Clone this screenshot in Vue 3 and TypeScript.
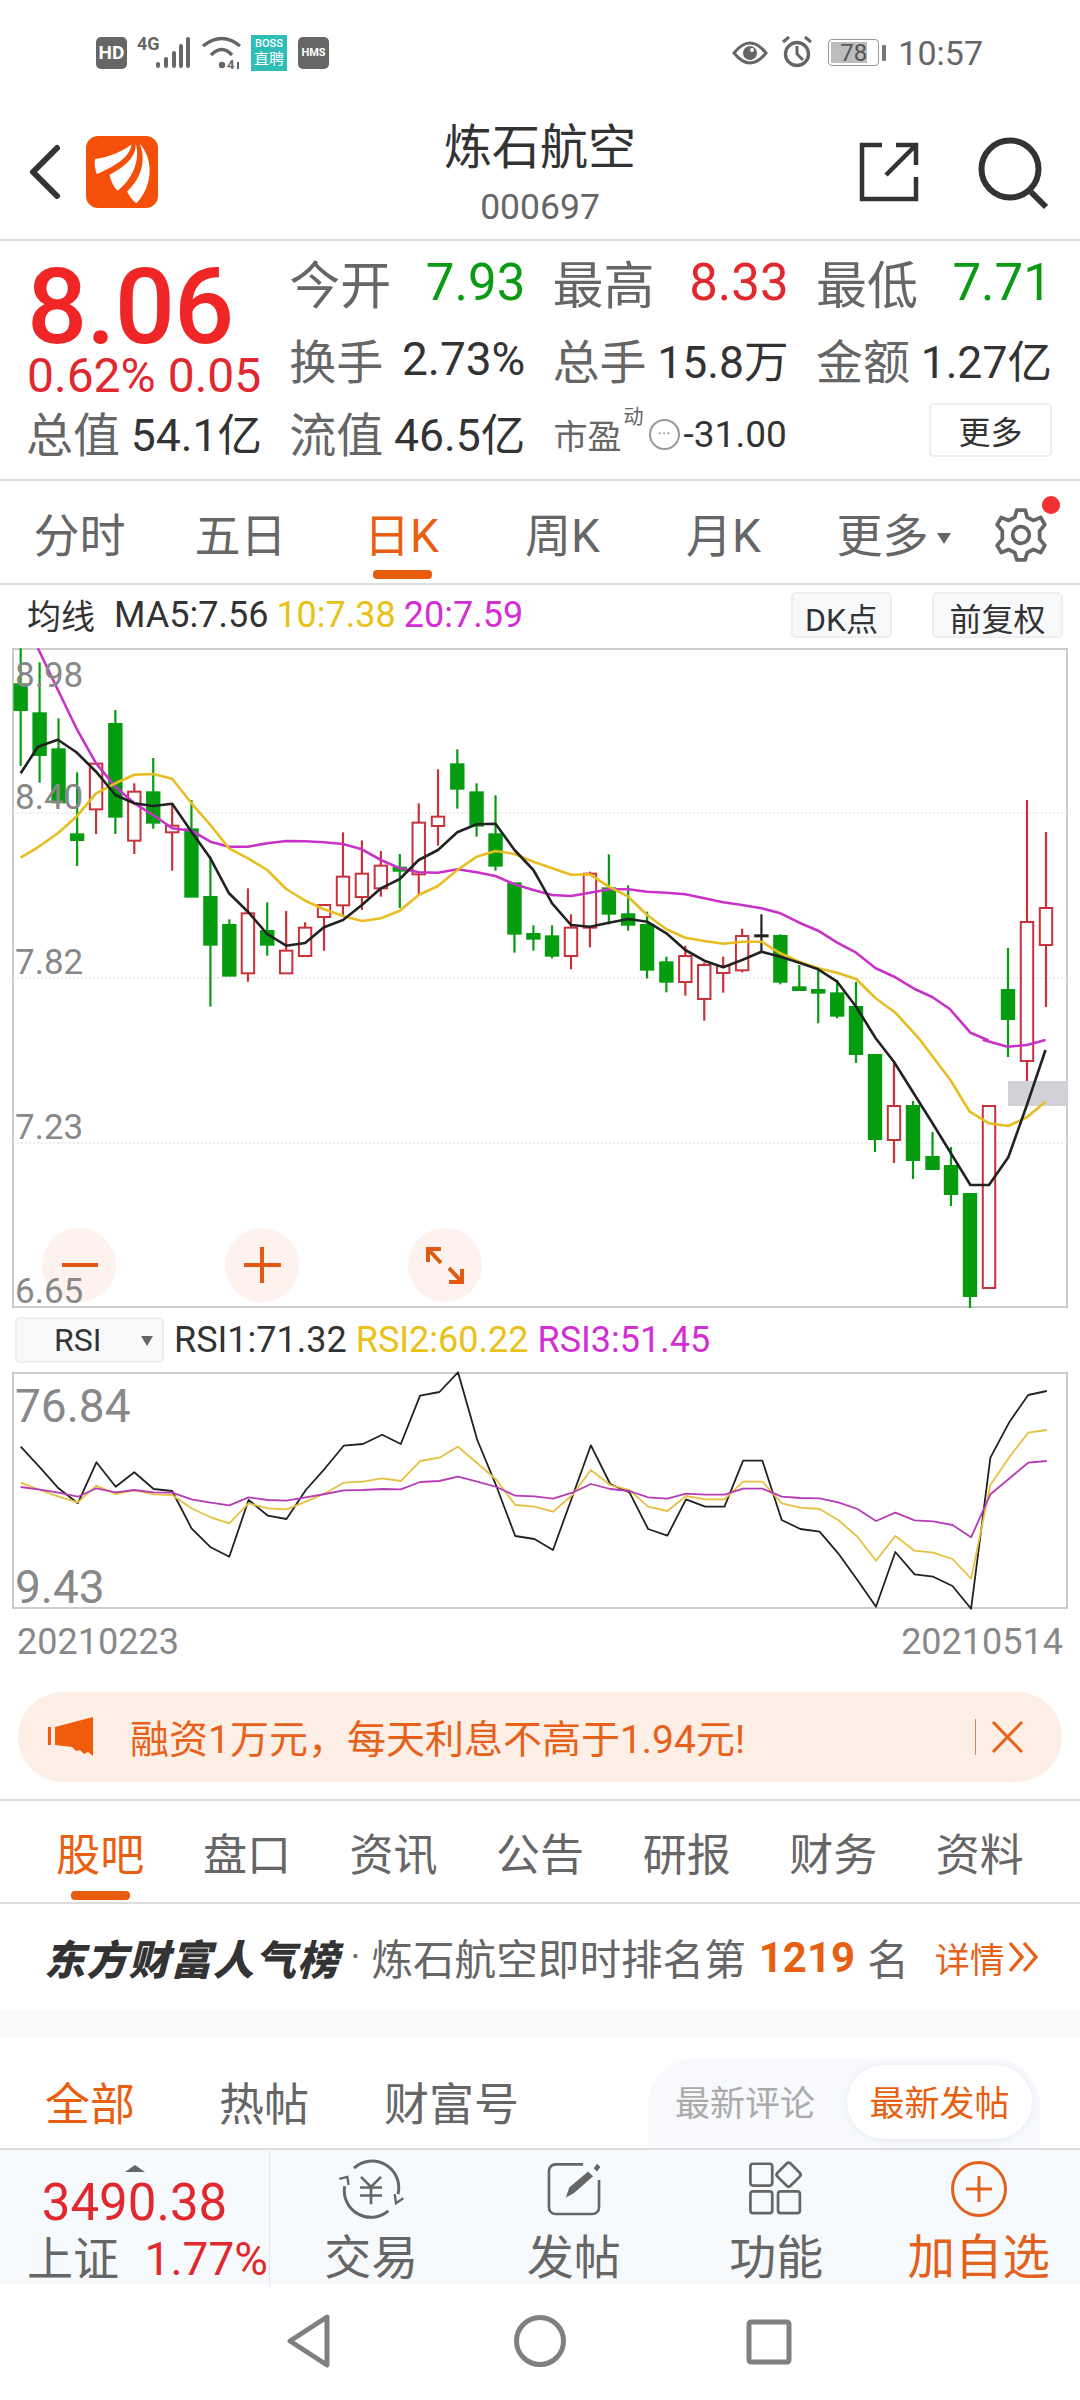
<template>
  <div class="page">
    <div class="status-bar">
      <div class="status-left">
        <div class="chip chip-hd">HD</div>
        <svg class="sig" width="54" height="40" viewBox="139 33 54 40">
          <text x="139" y="50" class="sig-text">4G</text>
          <rect x="158" y="62" width="4" height="6" rx="2" />
          <rect x="166" y="57" width="4" height="11" rx="2" />
          <rect x="174" y="51" width="4" height="17" rx="2" />
          <rect x="181" y="44" width="4" height="24" rx="2" />
          <rect x="188" y="37" width="4" height="31" rx="2" />
        </svg>
        <svg class="wifi" width="40" height="34" viewBox="201 36 40 34">
          <path d="M203 46 Q222 31 240 46" />
          <path d="M211 55 Q222 44 232 55" />
          <circle cx="222" cy="65" r="3.2" />
          <text x="227" y="69" class="wifi-text">4</text>
          <path d="M238 62 V69" class="wifi-thin" />
        </svg>
        <div class="chip-boss">
          <span class="boss-en">BOSS</span>
          <span class="boss-cn">直聘</span>
        </div>
        <div class="chip chip-hms">HMS</div>
      </div>
      <div class="status-right">
        <svg width="36" height="26" viewBox="0 0 36 26">
          <path d="M2 13 Q18 -7 34 13 Q18 33 2 13Z" fill="none" stroke="#666" stroke-width="3" />
          <circle cx="18" cy="13" r="7" fill="#666" />
          <circle cx="20" cy="10" r="2" fill="#fff" />
        </svg>
        <svg class="alarm" width="34" height="33" viewBox="0 0 34 33">
          <circle cx="17" cy="19" r="11.5" fill="none" stroke="#666" stroke-width="3.4" />
          <path d="M17 11 V19 L23 25 M3 7 L9 2 M31 7 L25 2" fill="none" stroke="#666" stroke-width="3" />
        </svg>
        <div class="battery">
          <div class="battery-fill"></div>
          <span class="battery-num">78</span>
        </div>
        <div class="battery-nub"></div>
        <span class="clock">10:57</span>
      </div>
    </div>

    <div class="nav">
      <svg class="back" width="34" height="56" viewBox="0 0 34 56">
        <path d="M29 4 L5 28 L29 52" fill="none" stroke="#333" stroke-width="6" stroke-linecap="round" stroke-linejoin="round" />
      </svg>
      <svg class="logo" width="72" height="72" viewBox="198 35 214 214">
        <rect x="198" y="35" width="214" height="214" rx="36" fill="#f4500a" />
        <path d="M225 103 C262 98 300 85 333 60 C330 90 300 118 230 148 C224 130 222 115 225 103Z" fill="#fff" />
        <path d="M345 56 C350 90 320 125 268 150 C272 170 280 185 292 198 C335 165 362 105 345 56Z" fill="#fff" />
        <path d="M356 56 C378 100 365 160 320 200 C328 215 338 228 348 235 C392 190 405 110 356 56Z" fill="#fff" />
      </svg>
      <div class="nav-title">
        <div class="stock-name">炼石航空</div>
        <div class="stock-code">000697</div>
      </div>
      <svg class="share" width="60" height="60" viewBox="858 142 60 60">
        <path d="M881 145 H861 V199 H915 V177 M885 175 L914 146 M895 145 H915 V165" fill="none" stroke="#333" stroke-width="4.5" />
      </svg>
      <svg class="search" width="70" height="70" viewBox="977 137 70 70">
        <circle cx="1009" cy="169" r="28.5" fill="none" stroke="#333" stroke-width="6" />
        <path d="M1030 192 L1045 207" fill="none" stroke="#333" stroke-width="6" />
      </svg>
    </div>

    <div class="quote">
      <div class="price-cell">
        <div class="price">8.06</div>
        <div class="price-sub">0.62% 0.05</div>
      </div>
      <div class="cell big"><span class="lab">今开</span><span class="green">7.93</span></div>
      <div class="cell big"><span class="lab">最高</span><span class="red">8.33</span></div>
      <div class="cell big"><span class="lab">最低</span><span class="green">7.71</span></div>
      <div class="cell"><span class="lab">换手</span><span>2.73%</span></div>
      <div class="cell"><span class="lab">总手</span><span class="unit-val">15.8万</span></div>
      <div class="cell"><span class="lab">金额</span><span class="unit-val">1.27亿</span></div>
      <div class="cell row3"><span class="lab">总值</span><span class="unit-val">54.1亿</span></div>
      <div class="cell row3"><span class="lab">流值</span><span class="unit-val">46.5亿</span></div>
      <div class="cell pe">
        <span class="lab pe-lab">市盈</span>
        <span class="pe-sup">动</span>
        <span class="pe-dots">···</span>
        <span class="pe-val">-31.00</span>
      </div>
      <div class="cell more-cell"><button class="more-btn">更多</button></div>
    </div>

    <div class="period-tabs">
      <div v-for="t in periods" :key="t" class="period" :class="{ active: t === '日K' }">{{ t }}</div>
      <div class="period period-more">更多<span class="caret"></span></div>
      <div class="gear-wrap">
        <svg width="56" height="56" viewBox="0 0 54 54">
          <path d="M23 3 H31 L33 10 L39 13 L46 10 L50 17 L45 23 V31 L50 37 L46 44 L39 41 L33 44 L31 51 H23 L21 44 L15 41 L8 44 L4 37 L9 31 V23 L4 17 L8 10 L15 13 L21 10Z" fill="none" stroke="#666" stroke-width="3.6" stroke-linejoin="round" />
          <circle cx="27" cy="27" r="8" fill="none" stroke="#666" stroke-width="3.6" />
        </svg>
        <span class="gear-dot"></span>
      </div>
    </div>

    <div class="ma-row">
      <span class="ma-label">均线</span>
      <span class="ma-val">MA5:7.56</span>
      <span class="ma-val yellow">10:7.38</span>
      <span class="ma-val magenta">20:7.59</span>
      <button class="tag-btn dk">DK点</button>
      <button class="tag-btn fq">前复权</button>
    </div>

    <div class="kline-box">
      <svg class="kline" width="1055" height="660" viewBox="13 648 1055 660">
        <line v-for="y in gridYs" :key="y" x1="13" x2="1068" :y1="y" :y2="y" class="grid-line" />
        <g v-for="(c, i) in candles" :key="i">
          <line :x1="c.x" :x2="c.x" :y1="c.high" :y2="c.low" :stroke="c.color" stroke-width="2.2" />
          <rect :x="c.x - 6.2" :y="c.top" width="12.4" :height="c.bottom - c.top" :fill="c.hollow ? '#fff' : c.color" :stroke="c.color" stroke-width="2" />
        </g>
        <rect x="1008" y="1081" width="60" height="25" fill="#d0d2d8" />
        <polyline :points="ma20" class="line" stroke="#c832c8" />
        <polyline :points="ma10" class="line" stroke="#e8bd20" />
        <polyline :points="ma5" class="line" stroke="#222" />
        <text v-for="l in kLabels" :key="l.t" x="15" :y="l.y" class="axis-text">{{ l.t }}</text>
        <g v-for="x in [79, 262, 445]" :key="x">
          <ellipse :cx="x" cy="1265" rx="37" ry="37" fill="#fdf1ec" opacity="0.92" />
        </g>
        <text x="15" y="1303" class="axis-text">6.65</text>
        <path d="M62 1265 H98 M244 1265 H281 M262 1247 V1283" class="zoom-icon" />
        <path d="M441 1263 L428 1249 M428 1262 V1249 H441 M449 1268 L462 1282 M462 1269 V1282 H449" class="zoom-icon" />
      </svg>
    </div>

    <div class="rsi-row">
      <div class="rsi-select">RSI<span class="rsi-caret"></span></div>
      <span class="rsi-val">RSI1:71.32</span>
      <span class="rsi-val yellow">RSI2:60.22</span>
      <span class="rsi-val magenta">RSI3:51.45</span>
    </div>

    <div class="rsi-box">
      <svg class="rsi-chart" width="1055" height="237" viewBox="13 1372 1055 237">
        <polyline :points="rsi1" class="thin" stroke="#222" />
        <polyline :points="rsi2" class="thin" stroke="#e8c040" />
        <polyline :points="rsi3" class="thin" stroke="#b53cb5" />
        <text x="15" y="1422" class="axis-text rsi-axis">76.84</text>
        <text x="15" y="1603" class="axis-text rsi-axis">9.43</text>
      </svg>
    </div>

    <div class="date-row">
      <span>20210223</span>
      <span>20210514</span>
    </div>

    <div class="banner">
      <svg width="46" height="40" viewBox="48 1717 46 40">
        <path d="M48 1727 H51 V1745 H48Z M55 1727 L93 1717 V1756 L88 1752 L84 1754 L80 1750 L76 1751 L72 1747 L55 1745Z" fill="#ee5c0c" />
      </svg>
      <span class="banner-text">融资1万元，每天利息不高于1.94元!</span>
      <span class="banner-sep"></span>
      <svg width="33" height="32" viewBox="0 0 33 32">
        <path d="M2 1 L31 31 M31 1 L2 31" fill="none" stroke="#e8611a" stroke-width="3" />
      </svg>
    </div>

    <div class="main-tabs">
      <div v-for="t in mainTabs" :key="t" class="main-tab" :class="{ active: t === '股吧' }">{{ t }}</div>
    </div>

    <div class="rank-row">
      <span class="rank-title">东方财富人气榜</span>
      <span class="rank-dot">·</span>
      <span class="rank-text">炼石航空即时排名第</span>
      <span class="rank-num">1219</span>
      <span class="rank-text rank-ming">名</span>
      <span class="rank-more">详情</span>
      <svg width="32" height="34" viewBox="0 0 32 34">
        <path d="M2 3 L14 17 L2 31 M16 3 L28 17 L16 31" fill="none" stroke="#e8611a" stroke-width="3.4" />
      </svg>
    </div>

    <div class="band"></div>

    <div class="filter-row">
      <span class="filter active">全部</span>
      <span class="filter hot">热帖</span>
      <span class="filter wealth">财富号</span>
      <div class="sort-pill">
        <span class="sort-item">最新评论</span>
        <span class="sort-item current">最新发帖</span>
      </div>
    </div>

    <div class="bottom-bar">
      <div class="index-box">
        <span class="index-arrow"></span>
        <div class="index-num">3490.38</div>
        <div class="index-line"><span class="index-name">上证</span><span class="index-pct">1.77%</span></div>
      </div>
      <div class="action">
        <svg width="70" height="62" viewBox="50 20 210 185">
          <g fill="none" stroke="#666" stroke-width="9">
            <path d="M104 50 A80 80 0 0 1 236 128 M207 178 A80 80 0 0 1 76 104" />
            <path d="M252 140 L230 155 L226 128 M60 82 L84 76 L88 100" stroke-width="7" />
            <path d="M125 76 L155 106 L185 76 M122 108 H188 M122 132 H188 M155 106 V158" stroke-width="8" />
          </g>
        </svg>
        <span>交易</span>
      </div>
      <div class="action">
        <svg width="58" height="58" viewBox="675 25 175 175">
          <path d="M790 38 H707 a20 20 0 0 0 -20 20 V168 a20 20 0 0 0 20 20 H818 a20 20 0 0 0 20 -20 V85" fill="none" stroke="#666" stroke-width="8" />
          <path d="M738 138 L748 108 L805 60 L820 74 L762 125Z M822 50 L832 36 L842 46 L832 60Z" fill="#666" />
        </svg>
        <span>发帖</span>
      </div>
      <div class="action">
        <svg width="58" height="58" viewBox="1285 30 170 170">
          <g fill="none" stroke="#666" stroke-width="8">
            <rect x="1295" y="41" width="64" height="64" rx="8" />
            <rect x="1295" y="122" width="64" height="64" rx="8" />
            <rect x="1376" y="122" width="64" height="64" rx="8" />
            <rect x="1380" y="46" width="54" height="54" rx="8" transform="rotate(45 1407 73)" />
          </g>
        </svg>
        <span>功能</span>
      </div>
      <div class="action add">
        <svg width="58" height="58" viewBox="0 0 58 58">
          <circle cx="29" cy="29" r="26.5" fill="none" stroke="#e2611d" stroke-width="3" />
          <path d="M16 29 H42 M29 16 V42" fill="none" stroke="#e2611d" stroke-width="3" />
        </svg>
        <span>加自选</span>
      </div>
    </div>

    <div class="sys-nav">
      <svg width="46" height="54" viewBox="0 0 46 54">
        <path d="M41 3 L4 27 L41 51Z" fill="none" stroke="#808080" stroke-width="5" stroke-linejoin="round" />
      </svg>
      <svg width="52" height="52" viewBox="0 0 52 52">
        <circle cx="26" cy="26" r="23.5" fill="none" stroke="#808080" stroke-width="5" />
      </svg>
      <svg width="46" height="46" viewBox="0 0 46 46">
        <rect x="3" y="3" width="40" height="40" rx="2" fill="none" stroke="#808080" stroke-width="5" />
      </svg>
    </div>
  </div>
</template>

<script setup lang="ts">
type Pt = [number, number]

const z3 = (x: number, y: number): Pt => [x / 2.904, 640 + y / 3]
const z4 = (x: number, y: number): Pt => [540 + x / 2.904, 640 + y / 3]
const z5 = (x: number, y: number): Pt => [x / 1.452, 1040 + y / 3]
const z6 = (x: number, y: number): Pt => [x / 1.452, 1340 + y / 3]

const pts = (list: number[][], fn: (x: number, y: number) => Pt) => list.map(p => fn(p[0], p[1]))
const toAttr = (list: Pt[]) => list.map(p => p[0].toFixed(1) + ',' + p[1].toFixed(1)).join(' ')

const periods = ['分时', '五日', '日K', '周K', '月K']
const mainTabs = ['股吧', '盘口', '资讯', '公告', '研报', '财务', '资料']
const gridYs = [813, 978, 1143]
const kLabels = [
  { t: '8.98', y: 687 },
  { t: '8.40', y: 809 },
  { t: '7.82', y: 974 },
  { t: '7.23', y: 1139 }
]

const GREEN = '#069c10'
const RED = '#c8323a'

// x, high, low, top, bottom (in zoomed px), g / r
const left: [number, number, number, number, number, string][] = [
  [60, 25, 378, 133, 210, 'g'], [115, 67, 428, 220, 345, 'g'], [170, 235, 490, 328, 487, 'g'],
  [224, 397, 678, 583, 600, 'g'], [279, 370, 582, 371, 508, 'r'], [335, 210, 582, 252, 530, 'g'],
  [390, 430, 642, 455, 602, 'r'], [445, 354, 566, 457, 548, 'g'], [500, 490, 692, 557, 577, 'r'],
  [556, 480, 770, 568, 770, 'g'], [611, 650, 1100, 771, 914, 'g'], [666, 838, 1007, 855, 1007, 'g'],
  [720, 745, 1025, 820, 1000, 'r'], [776, 787, 947, 873, 914, 'g'], [831, 813, 1000, 932, 1000, 'r'],
  [886, 847, 948, 863, 948, 'r'], [941, 795, 932, 795, 831, 'r'], [996, 577, 830, 710, 796, 'r'],
  [1051, 601, 810, 701, 771, 'r'], [1106, 633, 770, 677, 745, 'r'], [1161, 642, 804, 683, 692, 'g'],
  [1216, 490, 765, 548, 703, 'r'], [1272, 388, 617, 530, 558, 'r'], [1328, 328, 506, 373, 446, 'g'],
  [1384, 430, 590, 457, 557, 'g'], [1439, 466, 692, 583, 677, 'g'], [1494, 730, 938, 730, 881, 'g'],
  [1549, 856, 932, 882, 896, 'g']
]
const right: [number, number, number, number, number, string][] = [
  [35, 856, 955, 889, 947, 'g'], [90, 823, 988, 863, 948, 'r'], [145, 695, 922, 701, 863, 'r'],
  [200, 643, 853, 745, 821, 'g'], [256, 736, 872, 823, 854, 'g'], [311, 815, 1015, 855, 989, 'g'],
  [367, 950, 1057, 967, 1025, 'g'], [422, 917, 1067, 948, 1026, 'r'], [477, 968, 1142, 975, 1077, 'r'],
  [532, 950, 1058, 978, 999, 'r'], [587, 866, 997, 888, 991, 'r'], [643, 823, 935, 886, 889, 'k'],
  [698, 883, 1033, 888, 1025, 'g'], [753, 975, 1050, 1042, 1050, 'g'], [808, 990, 1150, 1050, 1058, 'g'],
  [863, 1020, 1135, 1060, 1127, 'g']
]
// these ones run over two crops, so real page px
const tail: [number, number, number, number, number, string][] = [
  [856, 982, 1063, 1007, 1054, 'g'], [875, 1055, 1152, 1055, 1139, 'g'], [894, 1063, 1163, 1106, 1140, 'r'],
  [913, 1101, 1179, 1106, 1160, 'g'], [932.5, 1132, 1169, 1157, 1169, 'g'], [951, 1147, 1206, 1166, 1194, 'g'],
  [970, 1194, 1308, 1194, 1296, 'g'], [989, 1106, 1288, 1106, 1288, 'r'], [1008, 948, 1057, 990, 1019, 'g'],
  [1027, 800, 1081, 922, 1061, 'r'], [1046, 832, 1007, 908, 945, 'r']
]

const mapCandle = (fn: (x: number, y: number) => Pt) => (c: [number, number, number, number, number, string]) => ({
  x: fn(c[0], 0)[0],
  high: fn(0, c[1])[1],
  low: fn(0, c[2])[1],
  top: fn(0, c[3])[1],
  bottom: fn(0, c[4])[1],
  color: c[5] === 'g' ? GREEN : c[5] === 'r' ? RED : '#222',
  hollow: c[5] === 'r'
})
const plain = (x: number, y: number): Pt => [x, y]

const candles = [...left.map(mapCandle(z3)), ...right.map(mapCandle(z4)), ...tail.map(mapCandle(plain))]

const ma5 = toAttr([
  ...pts([[60, 400], [110, 320], [168, 299], [222, 337], [279, 395], [335, 465], [390, 490], [445, 498], [500, 491], [556, 575], [611, 655], [665, 760], [720, 815], [776, 882], [831, 917], [886, 909], [941, 862], [996, 840], [1051, 795], [1106, 745], [1161, 717], [1216, 660], [1272, 630], [1328, 577], [1384, 553], [1439, 551], [1494, 630], [1549, 690]], z3),
  ...pts([[0, 725], [35, 790], [90, 855], [145, 860], [200, 848], [256, 837], [311, 845], [367, 880], [422, 930], [477, 962], [532, 982], [587, 960], [643, 935], [698, 950], [753, 968], [808, 988], [863, 1025], [918, 1100], [975, 1195]], z4),
  ...pts([[1298, 65], [1354, 250], [1409, 435], [1436, 435], [1464, 352], [1491, 195], [1518, 30]], z5)
])
const ma10 = toAttr([
  ...pts([[60, 653], [110, 622], [168, 580], [222, 530], [279, 460], [335, 430], [390, 404], [445, 402], [500, 416], [556, 490], [611, 555], [665, 625], [720, 655], [776, 690], [831, 747], [886, 782], [941, 808], [996, 828], [1051, 843], [1106, 835], [1161, 812], [1216, 765], [1272, 738], [1328, 690], [1384, 650], [1439, 633], [1494, 642], [1549, 665]], z3),
  ...pts([[35, 685], [90, 704], [145, 703], [200, 740], [256, 770], [311, 825], [367, 868], [422, 893], [477, 903], [532, 911], [587, 905], [643, 905], [698, 940], [753, 965], [808, 985], [863, 998], [918, 1017], [975, 1075], [1032, 1118], [1100, 1195]], z4),
  ...pts([[1380, 120], [1408, 215], [1436, 250], [1464, 258], [1491, 232], [1518, 185]], z5)
])
const ma20 = toAttr([
  ...pts([[110, 25], [168, 150], [222, 265], [279, 370], [335, 440], [390, 490], [445, 525], [500, 565], [556, 572], [611, 605], [665, 620], [720, 620], [776, 610], [831, 603], [886, 604], [941, 607], [996, 612], [1051, 628], [1106, 660], [1161, 685], [1216, 697], [1272, 698], [1328, 688], [1384, 697], [1439, 708], [1494, 733], [1549, 750]], z3),
  ...pts([[35, 765], [90, 768], [145, 758], [200, 748], [256, 748], [311, 755], [367, 758], [422, 763], [477, 775], [532, 787], [587, 795], [643, 805], [698, 820], [753, 848], [808, 872], [863, 908], [918, 938], [975, 985], [1032, 1012], [1090, 1048], [1140, 1072], [1190, 1107], [1250, 1178], [1300, 1200]], z4),
  ...pts([[1428, 0], [1463, 20], [1491, 15], [1518, 0]], z5)
])

const rsiX = [30, 58, 85, 113, 140, 168, 195, 223, 250, 278, 306, 333, 361, 389, 416, 444, 472, 499, 527, 555, 582, 610, 638, 665, 693, 721, 748, 776, 803, 831, 858, 886, 914, 941, 969, 996, 1024, 1052, 1079, 1107, 1135, 1162, 1190, 1217, 1245, 1272, 1300, 1328, 1355, 1383, 1410, 1438, 1466, 1493, 1520]
const rsiLine = (ys: number[]) => toAttr(ys.map((y, i) => z6(rsiX[i], y)))

const rsi1 = rsiLine([320, 382, 445, 490, 367, 440, 397, 447, 453, 565, 622, 650, 480, 527, 537, 450, 385, 317, 312, 284, 312, 167, 156, 97, 300, 440, 588, 597, 630, 470, 316, 432, 457, 567, 587, 478, 500, 500, 362, 362, 540, 567, 575, 640, 720, 800, 636, 703, 710, 738, 806, 353, 245, 165, 153])
const rsi2 = rsiLine([428, 450, 470, 487, 437, 462, 450, 463, 465, 505, 532, 550, 490, 505, 508, 485, 460, 428, 425, 415, 423, 363, 353, 320, 370, 420, 495, 500, 515, 465, 390, 435, 450, 500, 513, 468, 478, 478, 425, 425, 490, 503, 507, 540, 590, 662, 588, 632, 638, 657, 716, 435, 350, 278, 270])
const rsi3 = rsiLine([441, 449, 458, 470, 445, 457, 450, 457, 458, 478, 488, 496, 472, 480, 482, 472, 462, 451, 450, 447, 448, 426, 423, 410, 425, 441, 467, 469, 476, 458, 432, 447, 453, 472, 476, 461, 464, 464, 446, 446, 470, 474, 475, 487, 507, 543, 518, 541, 544, 555, 592, 463, 415, 368, 363])
</script>

<style scoped>
.page {
  width: 1080px;
  height: 2400px;
  overflow: hidden;
  background: #fff;
  font-family: Roboto, "Noto Sans CJK SC", sans-serif;
  color: #333;
  display: flex;
  flex-direction: column;
}

button { font-family: inherit; }
svg { overflow: visible; }

/* status bar */
.status-bar {
  height: 100px;
  flex: none;
  box-sizing: border-box;
  display: flex;
  align-items: center;
  justify-content: space-between;
  padding: 5px 97px 0 96px;
}
.status-left { display: flex; align-items: center; gap: 10px; }
.status-right { display: flex; align-items: center; }
.chip {
  width: 31px;
  height: 32px;
  background: #666;
  border-radius: 5px;
  color: #fff;
  font-weight: 700;
  display: flex;
  align-items: center;
  justify-content: center;
}
.chip-hd { font-size: 19px; }
.chip-hms { font-size: 11px; margin-left: 1px; }
.sig { fill: #666; }
.sig-text { font-size: 18px; font-weight: 700; fill: #666; }
.wifi { fill: #666; }
.wifi path { fill: none; stroke: #666; stroke-width: 3.4; }
.wifi-text { font-size: 13px; font-weight: 700; fill: #666; }
.wifi .wifi-thin { stroke-width: 2; }
.chip-boss {
  width: 36px;
  height: 36px;
  background: #2fbdb8;
  color: #fff;
  display: flex;
  flex-direction: column;
  align-items: center;
  justify-content: center;
}
.boss-en { font-size: 11px; line-height: 13px; font-weight: 500; }
.boss-cn { font-size: 15px; line-height: 18px; }
.alarm { margin-left: 12px; margin-top: -3px; }
.battery {
  position: relative;
  width: 51px;
  height: 27px;
  margin-left: 14px;
  border: 1.5px solid #999;
  border-radius: 4px;
  box-sizing: border-box;
  display: flex;
  align-items: center;
  justify-content: center;
}
.battery-fill {
  position: absolute;
  left: 2px;
  top: 2px;
  bottom: 2px;
  width: 36px;
  background: #bdbdbd;
}
.battery-num { position: relative; font-size: 24px; color: #555; }
.battery-nub { width: 4px; height: 16px; margin-left: 3px; background: #777; border-radius: 1px; }
.clock { margin-left: 12px; font-size: 34px; color: #666; }

/* nav */
.nav {
  position: relative;
  height: 141px;
  flex: none;
  box-sizing: border-box;
  border-bottom: 2px solid #ddd;
  display: flex;
  align-items: flex-start;
}
.back { margin: 44px 0 0 28px; }
.logo { margin: 36px 0 0 24px; }
.nav-title { position: absolute; left: 390px; right: 390px; top: 17px; text-align: center; }
.stock-name { font-size: 48px; line-height: 62px; color: #333; white-space: nowrap; }
.stock-code { font-size: 35.5px; line-height: 44px; color: #666; margin-top: 6px; }
.share { margin: 42px 0 0 701px; }
.search { margin: 37px 0 0 59px; }

/* quote */
.quote {
  height: 240px;
  flex: none;
  box-sizing: border-box;
  padding: 8px 0 0 27px;
  border-bottom: 2px solid #ddd;
  display: grid;
  grid-template-columns: repeat(4, 235px);
  grid-auto-rows: 74px;
  column-gap: 28.3px;
}
.price-cell { grid-row: span 2; display: flex; flex-direction: column; }
.price { font-size: 106px; font-weight: 500; line-height: 100px; margin-top: 8px; color: #f02626; letter-spacing: -1px; }
.price-sub { font-size: 48px; line-height: 36px; margin-top: 1px; color: #e0282e; white-space: nowrap; }
.cell {
  display: flex;
  align-items: center;
  justify-content: space-between;
  font-size: 46px;
  color: #333;
  white-space: nowrap;
  margin-bottom: 3px;
}
.cell.big { font-size: 51px; margin-bottom: 8px; }
.cell.row3 { margin-bottom: 6px; }
.unit-val { font-size: 44.5px; }
.lab { color: #666; font-size: 47px; margin-left: -1px; }
.big .lab { font-size: 51px; }
.green { color: #0a9a14; }
.red { color: #e0282e; }
.pe { justify-content: flex-start; position: relative; margin-bottom: 0; }
.pe .pe-lab { font-size: 34px; margin-left: 0; }
.pe-sup { position: absolute; left: 70px; top: 4px; font-size: 20px; color: #666; }
.pe-dots {
  width: 31px;
  height: 31px;
  margin-left: 27px;
  border: 2px solid #999;
  border-radius: 50%;
  box-sizing: border-box;
  font-size: 16px;
  line-height: 25px;
  text-align: center;
  color: #888;
}
.pe-val { font-size: 37px; margin-left: 4px; }
.more-cell { justify-content: flex-end; margin-bottom: 8px; }
.more-btn {
  width: 123px;
  height: 54px;
  background: #fff;
  border: 2px solid #eee;
  border-radius: 5px;
  font-size: 32px;
  color: #333;
  padding: 0;
}

/* period tabs */
.period-tabs {
  height: 104px;
  flex: none;
  box-sizing: border-box;
  border-bottom: 2px solid #ddd;
  display: grid;
  grid-template-columns: repeat(6, 161px) 114px;
  align-items: center;
  font-size: 46px;
  color: #666;
}
.period { position: relative; text-align: center; white-space: nowrap; left: -1px; }
.period-more { left: 8px; }
.period.active { color: #e85f12; }
.period.active::after {
  content: "";
  position: absolute;
  left: 50%;
  bottom: -14px;
  width: 59px;
  height: 9px;
  margin-left: -29px;
  background: #e85c0d;
  border-radius: 4px;
}
.caret {
  display: inline-block;
  margin-left: 8px;
  vertical-align: 8px;
  border-left: 7px solid transparent;
  border-right: 7px solid transparent;
  border-top: 11px solid #666;
}
.gear-wrap { position: relative; display: flex; padding-left: 27px; top: 3px; }
.gear-dot {
  position: absolute;
  left: 76px;
  top: -11px;
  width: 18px;
  height: 18px;
  background: #f03030;
  border-radius: 50%;
}

/* MA row */
.ma-row {
  height: 63px;
  flex: none;
  box-sizing: border-box;
  padding: 0 0 4px 27px;
  display: flex;
  align-items: center;
  font-size: 36px;
  color: #333;
  white-space: nowrap;
}
.ma-label { font-size: 34px; margin-right: 19px; }
.ma-val { margin-right: 8px; }
.yellow { color: #eac117; }
.magenta { color: #d22ed2; }
.tag-btn {
  height: 46px;
  background: #f8f9fb;
  border: 2px solid #eee;
  border-radius: 5px;
  font-size: 32px;
  color: #333;
  padding: 0;
}
.dk { width: 101px; margin-left: auto; }
.fq { width: 131px; margin-left: 40px; margin-right: 17px; }

/* kline */
.kline-box {
  width: 1056px;
  height: 660px;
  flex: none;
  margin-left: 12px;
  box-sizing: border-box;
  border: 2px solid #ccc;
}
.kline { display: block; margin: -2px 0 0 -1px; }
.grid-line { stroke: #e6e6e6; stroke-width: 1.5; stroke-dasharray: 2 2; }
.line { fill: none; stroke-width: 2.6; stroke-linejoin: round; }
.axis-text { font-size: 35px; fill: #888; }
.zoom-icon { fill: none; stroke: #e05a14; stroke-width: 4; }

/* RSI */
.rsi-row {
  height: 64px;
  flex: none;
  display: flex;
  align-items: center;
  padding-left: 15px;
  font-size: 36px;
  color: #333;
  white-space: nowrap;
}
.rsi-select {
  position: relative;
  width: 149px;
  height: 46px;
  box-sizing: border-box;
  padding-left: 37px;
  margin-right: 10px;
  background: #f8f9fb;
  border: 2px solid #eee;
  border-radius: 5px;
  font-size: 32px;
  line-height: 42px;
}
.rsi-caret {
  position: absolute;
  right: 9px;
  top: 17px;
  border-left: 6px solid transparent;
  border-right: 6px solid transparent;
  border-top: 10px solid #666;
}
.rsi-val { margin-right: 9px; }
.rsi-box {
  width: 1056px;
  height: 237px;
  flex: none;
  margin-left: 12px;
  box-sizing: border-box;
  border: 2px solid #ccc;
}
.rsi-chart { display: block; margin: -2px 0 0 -1px; }
.thin { fill: none; stroke-width: 1.8; stroke-linejoin: round; }
.rsi-axis { font-size: 46px; }

.date-row {
  height: 66px;
  flex: none;
  display: flex;
  align-items: center;
  justify-content: space-between;
  padding: 0 17px;
  font-size: 36px;
  color: #888;
}

/* banner */
.banner {
  height: 90px;
  flex: none;
  margin: 17px 18px 0;
  padding-left: 30px;
  background: #fdeee6;
  border-radius: 45px;
  display: flex;
  align-items: center;
}
.banner-text { margin: -2px 0 0 36px; font-size: 39px; color: #e8611a; white-space: nowrap; }
.banner-sep { width: 1px; height: 36px; margin-left: auto; margin-right: 15px; background: #c98a66; }
.banner svg:last-child { margin-right: 38px; }

/* main tabs */
.main-tabs {
  height: 105px;
  flex: none;
  margin-top: 17px;
  box-sizing: border-box;
  padding-left: 27px;
  border-top: 2px solid #ddd;
  border-bottom: 2px solid #ddd;
  display: grid;
  grid-template-columns: repeat(7, 146.6px);
  align-items: center;
  font-size: 44px;
  color: #666;
}
.main-tab { position: relative; text-align: center; white-space: nowrap; }
.main-tab.active { color: #e85f12; }
.main-tab.active::after {
  content: "";
  position: absolute;
  left: 50%;
  bottom: -16px;
  width: 59px;
  height: 9px;
  margin-left: -29px;
  background: #e85c0d;
  border-radius: 4px;
}

/* rank */
.rank-row {
  height: 106px;
  flex: none;
  display: flex;
  align-items: center;
  padding-left: 44px;
  white-space: nowrap;
}
.rank-title { font-size: 41px; font-weight: 900; font-style: italic; color: #333; letter-spacing: 1.2px; }
.rank-dot { font-size: 36px; color: #666; width: 32px; text-align: center; }
.rank-text { font-size: 41.6px; color: #666; }
.rank-num { font-size: 42px; font-weight: 700; color: #e85f12; margin-left: 13px; }
.rank-ming { margin-left: 12px; }
.rank-more { font-size: 35px; color: #e8611a; margin-left: 26px; }
.rank-row svg { margin-left: 3px; }

.band { height: 27px; flex: none; background: #f8f9fb; }

/* filter */
.filter-row {
  position: relative;
  height: 111px;
  flex: none;
  font-size: 45px;
  color: #666;
}
.filter { position: absolute; top: 40px; line-height: 58px; white-space: nowrap; }
.filter.active { left: 45px; color: #e85f12; }
.filter.hot { left: 219px; }
.filter.wealth { left: 384px; }
.sort-pill {
  position: absolute;
  left: 648px;
  top: 22px;
  width: 392px;
  height: 89px;
  box-sizing: border-box;
  background: #f7f9fc;
  border-radius: 45px 45px 0 0;
  display: flex;
  align-items: flex-start;
  padding: 6px 8px 0 0;
  justify-content: space-between;
  font-size: 35px;
}
.sort-item { height: 74px; line-height: 80px; color: #aaa; padding-left: 27px; white-space: nowrap; }
.sort-item.current {
  width: 185px;
  padding: 0;
  text-align: center;
  color: #e85f12;
  background: #fff;
  border-radius: 37px;
  box-shadow: 0 1px 6px rgba(180, 190, 210, 0.25);
}

/* bottom bar */
.bottom-bar {
  height: 136px;
  flex: none;
  box-sizing: border-box;
  border-top: 2px solid #ddd;
  background: #f7fafd;
  display: grid;
  grid-template-columns: 270px repeat(4, 202.5px);
}
.index-box {
  position: relative;
  box-sizing: border-box;
  border-right: 1px solid #e2e6ec;
  display: flex;
  flex-direction: column;
  align-items: center;
  padding-top: 26px;
}
.index-arrow {
  position: absolute;
  left: 125px;
  top: 15px;
  border-left: 10px solid transparent;
  border-right: 10px solid transparent;
  border-bottom: 7px solid #666;
}
.index-num { font-size: 51px; line-height: 54px; color: #e0282e; }
.index-line { align-self: flex-start; width: 241px; margin: 4px 0 0 27px; display: flex; justify-content: space-between; font-size: 46px; line-height: 50px; white-space: nowrap; }
.index-name { color: #666; }
.index-pct { color: #e0282e; }
.action {
  display: flex;
  flex-direction: column;
  align-items: center;
  padding-top: 8px;
  font-size: 47px;
  color: #666;
  white-space: nowrap;
}
.action svg { height: 62px; flex: none; }
.action span { line-height: 56px; margin-top: 10px; }
.action.add { color: #e2611d; font-size: 47.5px; }

.sys-nav { position: relative; flex: 1; }
.sys-nav svg { position: absolute; }
.sys-nav svg:nth-child(1) { left: 286px; top: 30px; }
.sys-nav svg:nth-child(2) { left: 514px; top: 31px; }
.sys-nav svg:nth-child(3) { left: 746px; top: 35px; }
</style>
